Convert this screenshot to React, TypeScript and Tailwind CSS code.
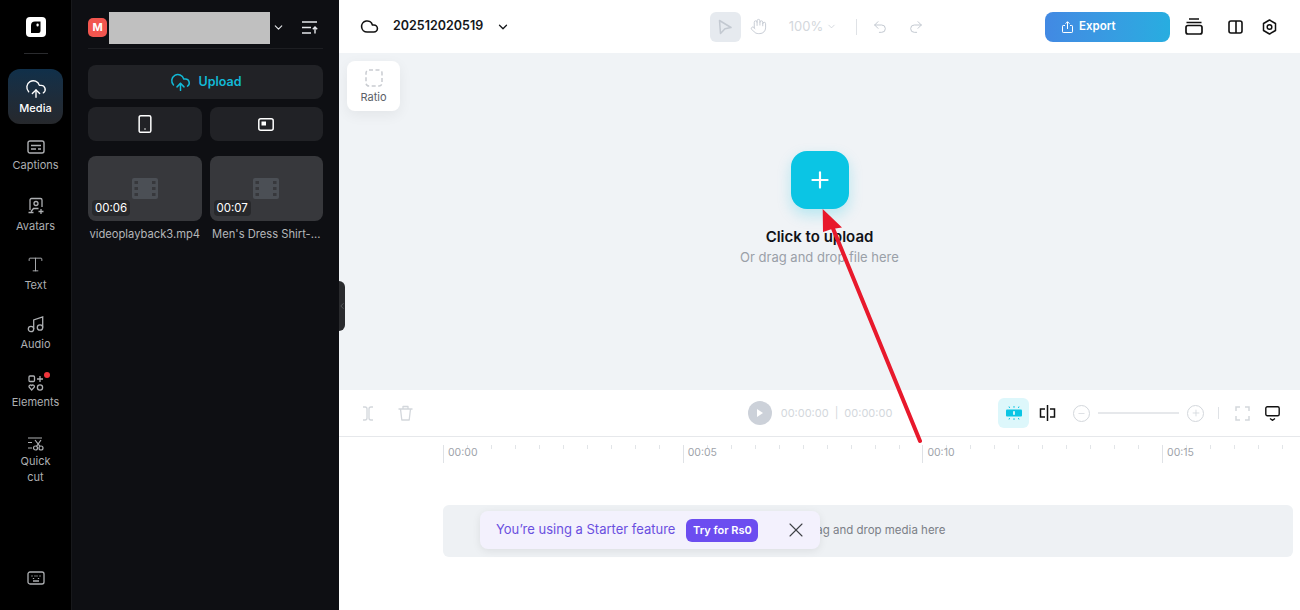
import { ChevronDown, ChevronLeft, Cloud, CloudUpload, Hand, Minus, Plus, Redo2, Smartphone, Type, Undo2, X } from 'lucide-react';
import type { ReactNode } from 'react';

function Logo() {
  return (
    <svg width="20" height="20" viewBox="0 0 20 20">
      <rect width="20" height="20" rx="4" fill="#fff" />
      <path d="M5 8.500a4 4 0 0 1 4-4h5.500v9.500a2 2 0 0 1-2 2H5z" fill="#000" />
      <rect x="10.500" y="6.500" width="2.200" height="3" rx="1.100" fill="#fff" />
    </svg>
  );
}

function CaptionsIcon() {
  return (
    <svg width="18" height="14" viewBox="0 0 18 14" fill="none" stroke="currentColor" strokeWidth="1.400">
      <rect x="1" y="1" width="16" height="12" rx="2" />
      <path d="M4 5.500h10M4 9h5M11 9h3" />
    </svg>
  );
}

function AvatarIcon() {
  return (
    <svg width="18" height="18" viewBox="0 0 18 18" fill="none" stroke="currentColor" strokeWidth="1.300">
      <path d="M3 13V3a1.500 1.500 0 0 1 1.500-1.500h9A1.500 1.500 0 0 1 15 3v7" />
      <circle cx="9" cy="6.500" r="2" />
      <path d="M4 14.500l2.500-3h5M1.500 15.500h5M14 12v5M11.500 14.500h5" />
    </svg>
  );
}

function AudioIcon() {
  return (
    <svg width="18" height="18" viewBox="0 0 18 18" fill="none" stroke="currentColor" strokeWidth="1.300">
      <circle cx="4" cy="14" r="2.700" />
      <circle cx="13" cy="12.500" r="2.700" />
      <path d="M6.700 14V5l9-3v10.500" />
    </svg>
  );
}

function ElementsIcon() {
  return (
    <svg width="16" height="16" viewBox="0 0 16 16" fill="none" stroke="currentColor" strokeWidth="1.300">
      <rect x="1" y="1" width="5.500" height="5.500" rx="1" />
      <path d="M12 1v6M9 4h6" />
      <path d="M3.700 15L1.200 12.200a1.500 1.500 0 0 1 2.500-1.600 1.500 1.500 0 0 1 2.500 1.600z" />
      <circle cx="12" cy="12.500" r="2.600" />
    </svg>
  );
}

function QuickCutIcon() {
  return (
    <svg width="17" height="14" viewBox="0 0 17 14" fill="none" stroke="currentColor" strokeWidth="1.200">
      <path d="M1 1h14M1 5.500h4M1 11h4" />
      <circle cx="8.500" cy="11" r="2" />
      <circle cx="14" cy="11" r="2" />
      <path d="M9.500 9.300L14 3M13 9.300L8 3" />
    </svg>
  );
}

function KeyboardIcon() {
  return (
    <svg width="18" height="14" viewBox="0 0 18 14" fill="none" stroke="currentColor" strokeWidth="1.300">
      <rect x="1" y="1" width="16" height="12" rx="2" />
      <path d="M5 4.500v1M8 4.500v1M10 4.500v1M13 4.500v1M6.500 7v1M11.500 7v1M6 10h6" />
    </svg>
  );
}

function FilmIcon() {
  return (
    <svg width="26" height="21" viewBox="0 0 26 21">
      <rect width="26" height="21" rx="2" fill="#4b4f55" />
      <g fill="#37383c">
        <rect x="2.500" y="3" width="3.500" height="3" />
        <rect x="2.500" y="9" width="3.500" height="3" />
        <rect x="2.500" y="15" width="3.500" height="3" />
        <rect x="20" y="3" width="3.500" height="3" />
        <rect x="20" y="9" width="3.500" height="3" />
        <rect x="20" y="15" width="3.500" height="3" />
      </g>
    </svg>
  );
}

function SortIcon() {
  return (
    <svg width="16" height="13" viewBox="0 0 16 13" fill="none" stroke="#e5e7eb" strokeWidth="1.400">
      <path d="M0 1h15M0 6.500h9M0 12h9M13 12.500V6M10.800 8.200L13 6l2.200 2.200" />
    </svg>
  );
}

function LandscapeIcon() {
  return (
    <svg width="16" height="13" viewBox="0 0 16 13" fill="none">
      <rect x="0.800" y="0.800" width="14.400" height="11.400" rx="2" stroke="#fff" strokeWidth="1.500" />
      <rect x="3.500" y="3.500" width="4.500" height="4" fill="#fff" />
    </svg>
  );
}

function PointerIcon() {
  return (
    <svg width="14" height="16" viewBox="0 0 14 16" fill="none" stroke="#c3c9d1" strokeWidth="1.500" strokeLinejoin="round">
      <path d="M1.500 1.500L13 8.500 7 9.700 2.500 14.500z" />
    </svg>
  );
}

function ExportIcon() {
  return (
    <svg width="11" height="12" viewBox="0 0 11 12" fill="none" stroke="#fff" strokeWidth="1">
      <path d="M3 4.500H1.200a.7.700 0 0 0-.7.700v5.600a.7.700 0 0 0 .7.700h8.600a.7.700 0 0 0 .7-.700V5.200a.7.700 0 0 0-.7-.700H8M5.500 8V.800M3.500 2.700l2-2 2 2" />
    </svg>
  );
}

function LayersIcon() {
  return (
    <svg width="18" height="17" viewBox="0 0 18 17" fill="none" stroke="#111" strokeWidth="1.700">
      <rect x="1" y="7.500" width="16" height="8.500" rx="2" />
      <path d="M1.500 4.500h15M4 1h10" />
    </svg>
  );
}

function PanelIcon() {
  return (
    <svg width="15" height="14" viewBox="0 0 15 14" fill="none" stroke="#111" strokeWidth="1.600">
      <rect x="1" y="1" width="13" height="12" rx="2" />
      <path d="M8 1v12" />
    </svg>
  );
}

function HexSettingsIcon() {
  return (
    <svg width="15" height="16" viewBox="0 0 15 16" fill="none" stroke="#111" strokeWidth="1.500">
      <path d="M7.500 1l6 3.500v7l-6 3.500-6-3.500v-7z" strokeLinejoin="round" />
      <circle cx="7.500" cy="8" r="2.300" />
    </svg>
  );
}

function SplitCursorIcon() {
  return (
    <svg width="12" height="15" viewBox="0 0 12 15" fill="none" stroke="#d3d7dc" strokeWidth="1.300">
      <path d="M1 1h2a2 2 0 0 1 2 2v9a2 2 0 0 1-2 2H1M11 1H9a2 2 0 0 0-2 2v9a2 2 0 0 0 2 2h2" />
    </svg>
  );
}

function BinIcon() {
  return (
    <svg width="15" height="16" viewBox="0 0 15 16" fill="none" stroke="#d3d7dc" strokeWidth="1.300" strokeLinejoin="round">
      <path d="M0.500 4h14M5 4V1.500h5V4M2.500 4l1.300 11h7.400L12.500 4" />
    </svg>
  );
}

function FitIcon() {
  return (
    <svg width="16" height="14" viewBox="0 0 16 14" fill="none">
      <rect x="0" y="3.500" width="16" height="7" rx="1" fill="#0bc5e4" />
      <rect x="7.200" y="5.200" width="1.600" height="3.600" fill="#fff" />
      <path d="M3 0.500l.6 1.500M8 0v1.800M13 0.500l-.6 1.500M3 13.500l.6-1.500M8 14v-1.800M13 13.500l-.6-1.500" stroke="#0bc5e4" strokeWidth="1" />
    </svg>
  );
}

function MagnetSplitIcon() {
  return (
    <svg width="17" height="16" viewBox="0 0 17 16" fill="none" stroke="#111" strokeWidth="1.500">
      <path d="M8.500 0v16M6 4H1.500v8H6M11 4h4.500v8H11" />
    </svg>
  );
}

function CircleIcon({ children }: { children: ReactNode }) {
  return <div className="flex h-[17px] w-[17px] items-center justify-center rounded-full border-[1.500px] border-[#d3d7dc] text-[#d3d7dc]">{children}</div>;
}

function FullscreenIcon() {
  return (
    <svg width="15" height="15" viewBox="0 0 15 15" fill="none" stroke="#d3d7dc" strokeWidth="1.500">
      <path d="M1 5V1h4M10 1h4v4M14 10v4h-4M5 14H1v-4" />
    </svg>
  );
}

function MonitorIcon() {
  return (
    <svg width="15" height="15" viewBox="0 0 15 15" fill="none" stroke="#111" strokeWidth="1.400">
      <rect x="0.800" y="0.800" width="13.400" height="9" rx="1.500" />
      <path d="M5 12.500l2.500 1.800 2.500-1.800" />
    </svg>
  );
}

function DashedRatioIcon() {
  return (
    <svg width="18" height="18" viewBox="0 0 18 18" fill="none" stroke="#c9ccd1" strokeWidth="1.500">
      <rect x="1" y="1" width="16" height="16" rx="3" strokeDasharray="4 2.500" />
    </svg>
  );
}

const railItems = [
  { label: 'Captions', icon: <CaptionsIcon /> },
  { label: 'Avatars', icon: <AvatarIcon /> },
  { label: 'Text', icon: <Type size={19} strokeWidth={1.200} /> },
  { label: 'Audio', icon: <AudioIcon /> },
];

function Rail() {
  return (
    <aside className="flex h-full w-[71px] shrink-0 flex-col items-center bg-black text-[#adafb2]">
      <div className="mt-[17px]">
        <Logo />
      </div>
      <div className="mt-[16px] h-px w-6 bg-[#2a2b2e]" />
      <div className="mt-[15px] flex h-[55px] w-[55px] flex-col items-center justify-center gap-[1px] rounded-xl bg-gradient-to-b from-[#10304a] to-[#26282c] text-white">
        <CloudUpload size={22} strokeWidth={1.500} />
        <span className="text-[11px] leading-[14px] font-medium">Media</span>
      </div>
      {railItems.map((item) => (
        <div key={item.label} className="mt-1 flex h-[55px] w-[55px] flex-col items-center justify-center gap-[4px]">
          {item.icon}
          <span className="text-[11px] leading-[14px]">{item.label}</span>
        </div>
      ))}
      <div className="relative mt-1 flex h-[55px] w-[55px] flex-col items-center justify-center gap-[4px]">
        <ElementsIcon />
        <span className="text-[11px] leading-[14px]">Elements</span>
        <span className="absolute top-[8px] right-[13px] h-[6px] w-[6px] rounded-full bg-[#f0353b]" />
      </div>
      <div className="mt-[18px] flex w-[55px] flex-col items-center gap-[2px]">
        <QuickCutIcon />
        <span className="text-center text-[11px] leading-[16px]">
          Quick
          <br />
          cut
        </span>
      </div>
      <div className="mt-auto mb-[25px]">
        <KeyboardIcon />
      </div>
    </aside>
  );
}

function MediaCard({ name, time }: { name: string; time: string }) {
  return (
    <div className="min-w-0">
      <div className="relative flex h-[65px] items-center justify-center rounded-lg bg-[#37383c]">
        <FilmIcon />
        <span className="absolute bottom-[5px] left-1 rounded bg-[#27282b] px-[3px] text-[11.500px] leading-4 text-white">{time}</span>
      </div>
      <div className="mt-[5px] truncate text-center text-[11.200px] leading-4 text-[#b4b6b9]">{name}</div>
    </div>
  );
}

function MediaPanel() {
  return (
    <section className="h-full w-[268px] shrink-0 border-l border-[#17181b] bg-[#0e0f13] px-4">
      <div className="flex h-[49px] items-center border-b border-[#1d1e22] pt-[8px] pb-[1px]">
        <div className="flex h-[19px] w-[19px] shrink-0 items-center justify-center rounded-[5px] bg-[#f2564f] text-[11px] font-bold text-white">M</div>
        <div className="ml-[2px] h-8 w-[161px] shrink-0 bg-[#c0c0c0]" />
        <ChevronDown size={13} className="ml-[2px] text-[#e5e7eb]" strokeWidth={2} />
        <div className="ml-auto mr-[5px]">
          <SortIcon />
        </div>
      </div>
      <button className="mt-[16px] flex h-[34px] w-full items-center justify-center gap-2 rounded-lg bg-[#212226] text-[12.500px] font-semibold text-[#12b9d6]">
        <CloudUpload size={21} strokeWidth={1.700} />
        Upload
      </button>
      <div className="mt-2 grid grid-cols-2 gap-2">
        <button className="flex h-[34px] items-center justify-center rounded-lg bg-[#212226] text-white">
          <Smartphone size={20} strokeWidth={1.800} />
        </button>
        <button className="flex h-[34px] items-center justify-center rounded-lg bg-[#212226]">
          <LandscapeIcon />
        </button>
      </div>
      <div className="mt-[15px] grid grid-cols-2 gap-2">
        <MediaCard name="videoplayback3.mp4" time="00:06" />
        <MediaCard name="Men's Dress Shirt-..." time="00:07" />
      </div>
    </section>
  );
}

function Header() {
  return (
    <header className="flex h-[53px] shrink-0 items-center bg-white">
      <div className="flex flex-1 items-center pl-[21px]">
        <Cloud size={19} strokeWidth={2} className="text-[#111]" />
        <span className="ml-[14px] text-[12.500px] font-semibold text-[#14161a]">202512020519</span>
        <ChevronDown size={14} strokeWidth={2.200} className="ml-[13px] text-[#14161a]" />
      </div>
      <div className="flex items-center pr-[3px] text-[#c3c9d1]">
        <div className="flex h-[30px] w-[31px] items-center justify-center rounded-md bg-[#e6eaef]">
          <PointerIcon />
        </div>
        <Hand size={17} strokeWidth={1.300} className="ml-[9px]" />
        <span className="ml-[22px] text-[13px] text-[#d3d7dc]">100%</span>
        <ChevronDown size={11} strokeWidth={1.500} className="ml-[3px]" />
        <div className="ml-[19px] h-4 w-px bg-[#dfe2e6]" />
        <Undo2 size={16} strokeWidth={1.500} className="ml-[15px]" />
        <Redo2 size={16} strokeWidth={1.500} className="ml-[20px]" />
      </div>
      <div className="flex flex-1 items-center justify-end pr-[23px]">
        <button className="flex h-[30px] w-[125px] items-center gap-[6px] rounded-lg bg-gradient-to-r from-[#4289e3] to-[#27ade0] pl-[17px] text-[11.500px] font-semibold text-white">
          <ExportIcon />
          Export
        </button>
        <div className="ml-[15px]">
          <LayersIcon />
        </div>
        <div className="ml-[25px]">
          <PanelIcon />
        </div>
        <div className="ml-[19px]">
          <HexSettingsIcon />
        </div>
      </div>
    </header>
  );
}

function Canvas() {
  return (
    <div className="relative flex h-[337px] shrink-0 flex-col items-center bg-[#f0f3f6] pt-[98px]">
      <div className="absolute top-2 left-2 flex h-[50px] w-[53px] flex-col items-center justify-center gap-[3px] rounded-lg bg-white shadow-[0_4px_14px_rgba(0,0,0,0.06)]">
        <DashedRatioIcon />
        <span className="text-[11px] leading-[14px] text-[#5b6068]">Ratio</span>
      </div>
      <button className="flex h-[58px] w-[58px] items-center justify-center rounded-[16px] bg-[#0bc5e4] text-white shadow-[0_6px_14px_rgba(11,197,228,0.25)]">
        <Plus size={26} strokeWidth={2} />
      </button>
      <div className="mt-[18px] text-[15px] leading-[20px] font-semibold text-[#101216]">Click to upload</div>
      <div className="text-[13px] leading-[20px] text-[#9aa0a8]">Or drag and drop file here</div>
    </div>
  );
}

function Toolbar() {
  return (
    <div className="flex h-[47px] shrink-0 items-center border-b border-[#e6e8eb] bg-white">
      <div className="flex flex-1 items-center pl-[23px]">
        <SplitCursorIcon />
        <div className="ml-[24px]">
          <BinIcon />
        </div>
      </div>
      <div className="flex items-center pr-[2px] text-[11px] text-[#d3d7dc]">
        <div className="flex h-6 w-6 items-center justify-center rounded-full bg-[#ccd1d9]">
          <div className="ml-[1px] h-0 w-0 border-y-[4px] border-l-[6px] border-y-transparent border-l-white" />
        </div>
        <span className="ml-[9px]">00:00:00</span>
        <span className="mx-[6px]">|</span>
        <span>00:00:00</span>
      </div>
      <div className="flex flex-1 items-center justify-end pr-[20px]">
        <div className="flex h-[30px] w-[31px] items-center justify-center rounded-md bg-[#ddf7fb]">
          <FitIcon />
        </div>
        <div className="ml-[10px]">
          <MagnetSplitIcon />
        </div>
        <div className="ml-[17px]">
          <CircleIcon>
            <Minus size={9} strokeWidth={2} />
          </CircleIcon>
        </div>
        <div className="ml-[8px] h-[2px] w-[81px] bg-[#e6e8eb]" />
        <div className="ml-[8px]">
          <CircleIcon>
            <Plus size={10} strokeWidth={2} />
          </CircleIcon>
        </div>
        <div className="ml-[14px] h-[12px] w-px bg-[#dfe2e6]" />
        <div className="ml-[16px]">
          <FullscreenIcon />
        </div>
        <div className="ml-[15px]">
          <MonitorIcon />
        </div>
      </div>
    </div>
  );
}

const marks = ['00:00', '00:05', '00:10', '00:15'];
const ticks = Array.from({ length: 9 }, (_, i) => i);

function Timeline() {
  return (
    <div className="relative flex-1 bg-white pl-[104px]">
      <div className="flex pt-2">
        {marks.map((mark) => (
          <div key={mark} className="h-[18px] w-[239.700px] shrink-0 border-l border-[#dfe2e6]">
            <div className="flex h-[2px]">
              {ticks.map((t) => (
                <div key={t} className="h-[4px] w-[24px] shrink-0 border-r border-[#e2e5e8]" />
              ))}
            </div>
            <div className="pl-[4px] text-[10.500px] leading-[12px] text-[#9ea3aa]">{mark}</div>
          </div>
        ))}
      </div>
      <div className="mt-[42px] mr-[7px] flex h-[52px] items-center justify-center rounded-md bg-[#eef1f4] pl-[13px] text-[11.500px] text-[#7b8087]">
        Drag and drop media here
      </div>
      <div className="absolute top-[74px] left-[141px] flex h-[38px] w-[340px] items-center rounded-lg bg-[#f3f1fd] pr-[12px] pl-[16px] shadow-[0_2px_8px_rgba(0,0,0,0.08)]">
        <span className="text-[13px] text-[#6a4fe0]">You’re using a Starter feature</span>
        <button className="ml-[11px] flex h-[23px] w-[72px] items-center justify-center rounded-md bg-[#6c4df0] text-[11px] font-semibold text-white">
          Try for Rs0
        </button>
        <X size={24} strokeWidth={1.100} className="ml-auto text-[#3f4146]" />
      </div>
    </div>
  );
}

function RedArrow() {
  return (
    <svg className="pointer-events-none absolute top-0 left-0" width="1300" height="610" viewBox="0 0 1300 610">
      <path d="M920 441L832 226" stroke="#e8192c" strokeWidth="4" strokeLinecap="round" />
      <path d="M822.700 209L842 227.500 832 229 823 232z" fill="#e8192c" />
    </svg>
  );
}

export default function App() {
  return (
    <div className="relative flex h-[610px] w-[1300px] overflow-hidden bg-white font-['Inter',sans-serif]">
      <Rail />
      <MediaPanel />
      <main className="flex min-w-0 flex-1 flex-col">
        <Header />
        <Canvas />
        <Toolbar />
        <Timeline />
      </main>
      <div className="absolute top-[281px] left-[339px] flex h-[50px] w-[6px] items-center justify-center overflow-hidden rounded-r-md bg-[#2a2b2e] text-[#6b6e73]">
        <ChevronLeft size={10} strokeWidth={1.500} className="shrink-0" />
      </div>
      <RedArrow />
    </div>
  );
}
